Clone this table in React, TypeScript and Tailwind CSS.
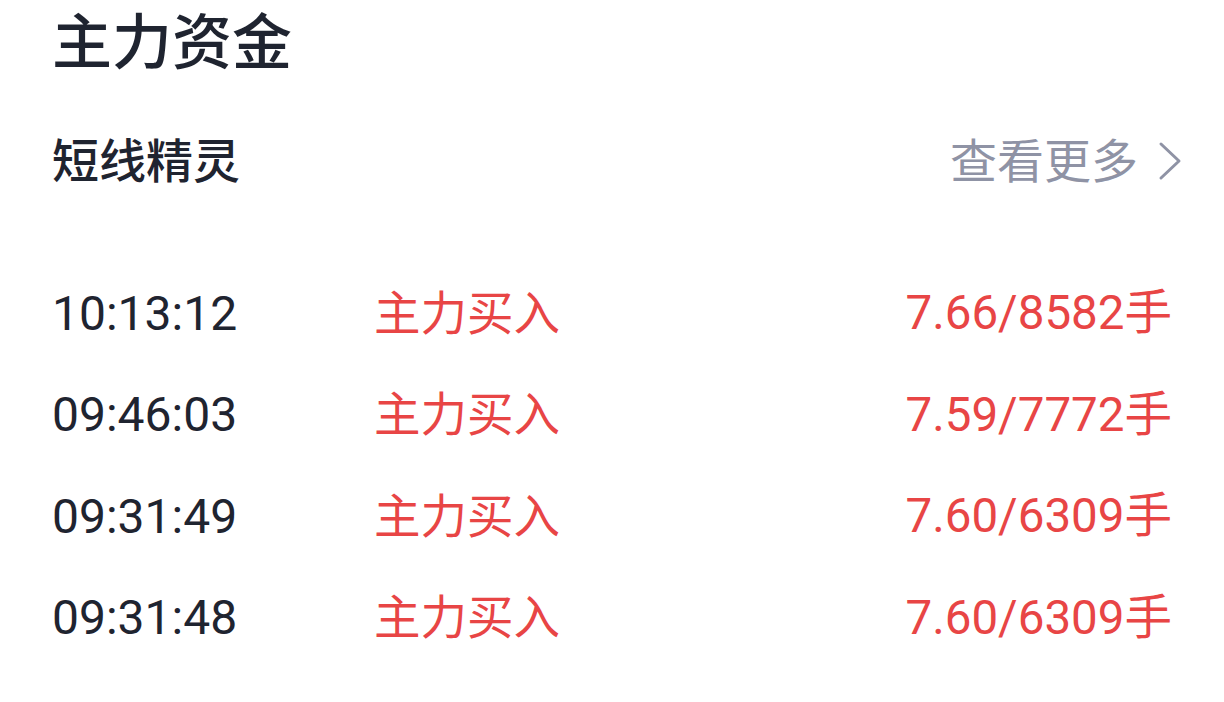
import React from 'react';

const ROWS = [
  { time: '10:13:12', action: '主力买入', value: '7.66/8582手' },
  { time: '09:46:03', action: '主力买入', value: '7.59/7772手' },
  { time: '09:31:49', action: '主力买入', value: '7.60/6309手' },
  { time: '09:31:48', action: '主力买入', value: '7.60/6309手' },
];

const FONT = { fontFamily: 'Roboto, "Noto Sans CJK SC", sans-serif' };

export default function App() {
  return (
    <div className="w-[1224px] h-[702px] bg-white overflow-hidden" style={FONT}>
      <div className="pl-[52px] pt-[8px] h-[80px] flex items-center">
        <h1 className="text-[60px] leading-none font-medium text-[#1f2430]">主力资金</h1>
      </div>

      <div className="pl-[52px] pr-[42px] mt-[56px] h-[50px] flex items-center justify-between">
        <h2 className="text-[47px] leading-none font-medium text-[#1f2430]">短线精灵</h2>
        <button className="flex items-center gap-[20px] text-[47px] leading-none text-[#8f93a5]">
          <span>查看更多</span>
          <svg width="24" height="40" viewBox="0 0 24 40" fill="none">
            <path d="M3 3 L21 20 L3 37" stroke="#8f93a5" strokeWidth="3" strokeLinecap="round" strokeLinejoin="round" />
          </svg>
        </button>
      </div>

      <div className="mt-[77px] pl-[52px] pr-[52px]">
        {ROWS.map((row) => (
          <div key={row.time} className="h-[101.5px] flex items-center">
            <span className="w-[322px] text-[48px] leading-none text-[#1f2430]">{row.time}</span>
            <span className="text-[46.5px] leading-none text-[#e84545]">{row.action}</span>
            <span className="ml-auto text-[47.5px] leading-none text-[#e84545]">{row.value}</span>
          </div>
        ))}
      </div>
    </div>
  );
}
